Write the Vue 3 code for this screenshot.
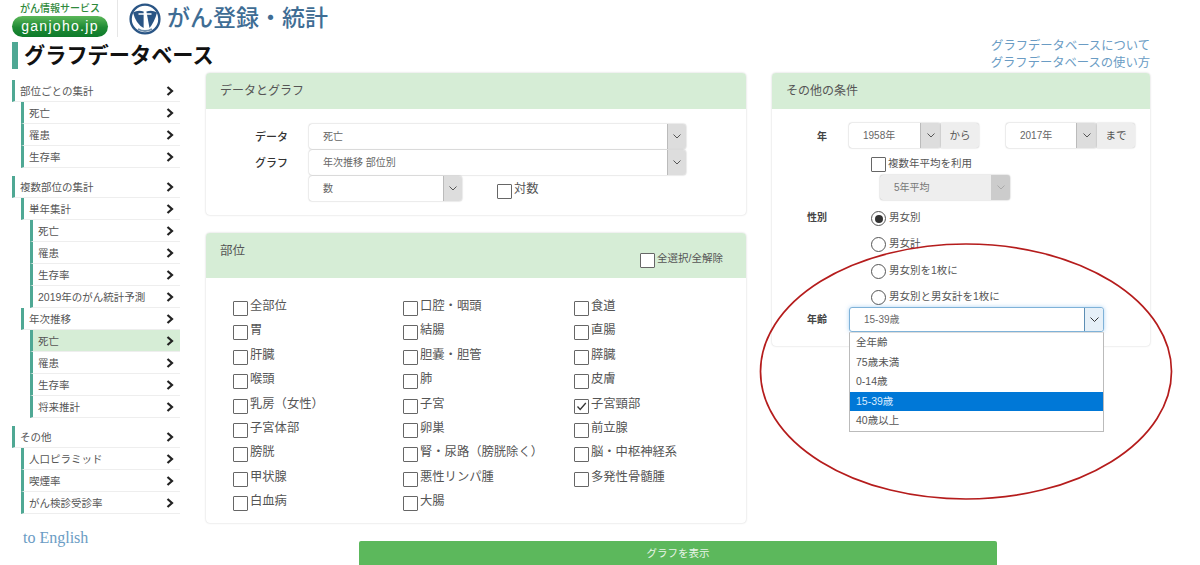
<script setup>
const menu = [
  [
    { label: '部位ごとの集計', level: 0 },
    { label: '死亡', level: 1 },
    { label: '罹患', level: 1 },
    { label: '生存率', level: 1 },
  ],
  [
    { label: '複数部位の集計', level: 0 },
    { label: '単年集計', level: 1 },
    { label: '死亡', level: 2 },
    { label: '罹患', level: 2 },
    { label: '生存率', level: 2 },
    { label: '2019年のがん統計予測', level: 2 },
    { label: '年次推移', level: 1 },
    { label: '死亡', level: 2, active: true },
    { label: '罹患', level: 2 },
    { label: '生存率', level: 2 },
    { label: '将来推計', level: 2 },
  ],
  [
    { label: 'その他', level: 0 },
    { label: '人口ピラミッド', level: 1 },
    { label: '喫煙率', level: 1 },
    { label: 'がん検診受診率', level: 1 },
  ],
]

const sites = [
  '全部位', '口腔・咽頭', '食道',
  '胃', '結腸', '直腸',
  '肝臓', '胆嚢・胆管', '膵臓',
  '喉頭', '肺', '皮膚',
  '乳房（女性）', '子宮', '子宮頸部',
  '子宮体部', '卵巣', '前立腺',
  '膀胱', '腎・尿路（膀胱除く）', '脳・中枢神経系',
  '甲状腺', '悪性リンパ腫', '多発性骨髄腫',
  '白血病', '大腸',
]

const sexes = ['男女別', '男女計', '男女別を1枚に', '男女別と男女計を1枚に']
const ages = ['全年齢', '75歳未満', '0-14歳', '15-39歳', '40歳以上']
</script>

<template>
  <div class="page">
    <header class="site-head">
      <div class="brand">
        <span class="brand-sub">がん情報サービス</span>
        <span class="brand-pill">ganjoho.jp</span>
      </div>
      <div class="logo">
        <svg width="32" height="32" viewBox="0 0 32 32" aria-hidden="true">
          <circle cx="16" cy="16" r="14.4" fill="#fff" stroke="#2a5585" stroke-width="2.4" />
          <path d="M4 9.5 Q9 6.5 14.6 8.5 L14.6 25 Q7 21 4 9.5 Z" fill="#2a5585" />
          <path d="M28 9.5 Q23 6.5 17.4 8.5 L20.5 25 Q25.5 19 28 9.5 Z" fill="#2a5585" />
          <path d="M9.5 11 H22.5 M16 8 V24" stroke="#fff" stroke-width="1.5" fill="none" />
          <path d="M9 26 Q16 30 23 26" stroke="#6f8eab" stroke-width="2" fill="none" />
        </svg>
        <span class="logo-text">がん登録・統計</span>
      </div>
    </header>

    <div class="title-row">
      <h1 class="title">グラフデータベース</h1>
      <div class="help-links">
        <a>グラフデータベースについて</a>
        <a>グラフデータベースの使い方</a>
      </div>
    </div>

    <div class="columns">
      <nav class="side">
        <div v-for="(group, g) in menu" :key="g" class="side-group">
          <div
            v-for="(item, i) in group"
            :key="i"
            class="side-row"
            :class="['lv' + item.level, { active: item.active }]"
          >
            <span>{{ item.label }}</span>
            <svg class="chev" width="8" height="10" viewBox="0 0 8 10" aria-hidden="true">
              <polyline points="1.5,1 6,5 1.5,9" fill="none" stroke="#222" stroke-width="2.2" />
            </svg>
          </div>
        </div>
        <a class="to-english">to English</a>
      </nav>

      <main class="middle">
        <section class="panel">
          <div class="panel-head">データとグラフ</div>
          <div class="data-body">
            <div class="form-row">
              <span class="form-label">データ</span>
              <div class="select wide">
                <span class="select-value">死亡</span>
                <span class="select-arrow">
                  <svg width="8" height="5" viewBox="0 0 8 5"><polyline points="0.5,0.5 4,4 7.5,0.5" fill="none" stroke="#555" /></svg>
                </span>
              </div>
            </div>
            <div class="form-row">
              <span class="form-label">グラフ</span>
              <div class="select wide">
                <span class="select-value">年次推移 部位別</span>
                <span class="select-arrow">
                  <svg width="8" height="5" viewBox="0 0 8 5"><polyline points="0.5,0.5 4,4 7.5,0.5" fill="none" stroke="#555" /></svg>
                </span>
              </div>
            </div>
            <div class="form-row">
              <span class="form-label"></span>
              <div class="select narrow">
                <span class="select-value">数</span>
                <span class="select-arrow">
                  <svg width="8" height="5" viewBox="0 0 8 5"><polyline points="0.5,0.5 4,4 7.5,0.5" fill="none" stroke="#555" /></svg>
                </span>
              </div>
              <label class="check log-check"><span class="box"></span><span>対数</span></label>
            </div>
          </div>
        </section>

        <section class="panel">
          <div class="panel-head site-head-row">
            <span class="site-title">部位</span>
            <label class="check all-check"><span class="box"></span><span>全選択/全解除</span></label>
          </div>
          <div class="site-grid">
            <label v-for="site in sites" :key="site" class="check">
              <span class="box">
                <svg v-if="site === '子宮頸部'" width="13" height="13" viewBox="0 0 13 13">
                  <polyline points="2.5,6.5 5.2,9.5 10.8,3" fill="none" stroke="#333" stroke-width="1.3" />
                </svg>
              </span>
              <span>{{ site }}</span>
            </label>
          </div>
        </section>

        <button class="show-btn">グラフを表示</button>
      </main>

      <aside class="right">
        <section class="panel">
          <div class="panel-head">その他の条件</div>
          <div class="cond-body">
            <div class="cond-row">
              <span class="cond-label">年</span>
              <div class="year-range">
                <div class="select year">
                  <span class="select-value">1958年</span>
                  <span class="select-arrow">
                    <svg width="8" height="5" viewBox="0 0 8 5"><polyline points="0.5,0.5 4,4 7.5,0.5" fill="none" stroke="#555" /></svg>
                  </span>
                </div>
                <span class="addon">から</span>
              </div>
              <div class="year-range">
                <div class="select year">
                  <span class="select-value">2017年</span>
                  <span class="select-arrow">
                    <svg width="8" height="5" viewBox="0 0 8 5"><polyline points="0.5,0.5 4,4 7.5,0.5" fill="none" stroke="#555" /></svg>
                  </span>
                </div>
                <span class="addon">まで</span>
              </div>
            </div>
            <label class="check avg-check"><span class="box"></span><span>複数年平均を利用</span></label>
            <div class="select disabled">
              <span class="select-value">5年平均</span>
              <span class="select-arrow">
                <svg width="8" height="5" viewBox="0 0 8 5"><polyline points="0.5,0.5 4,4 7.5,0.5" fill="none" stroke="#aaa" /></svg>
              </span>
            </div>
            <div class="sex-row">
              <span class="cond-label sex-label">性別</span>
              <div class="radios">
                <label v-for="(sex, i) in sexes" :key="sex" class="radio">
                  <span class="circle" :class="{ on: i === 0 }"></span>
                  <span>{{ sex }}</span>
                </label>
              </div>
            </div>
            <div class="cond-row age-row">
              <span class="cond-label">年齢</span>
              <div class="age-wrap">
                <div class="select age">
                  <span class="select-value">15-39歳</span>
                  <span class="select-arrow">
                    <svg width="9" height="6" viewBox="0 0 9 6"><polyline points="0.5,0.5 4.5,4.5 8.5,0.5" fill="none" stroke="#333" /></svg>
                  </span>
                </div>
                <ul class="age-menu">
                  <li v-for="age in ages" :key="age" :class="{ picked: age === '15-39歳' }">{{ age }}</li>
                </ul>
              </div>
            </div>
          </div>
        </section>
      </aside>
    </div>

    <!-- hand-drawn mark on the screenshot -->
    <svg class="red-mark" width="420" height="262" viewBox="0 0 420 262" aria-hidden="true">
      <ellipse cx="209" cy="130.5" rx="205.5" ry="127.5" fill="none" stroke="#b51c1c" stroke-width="1.7" />
    </svg>
  </div>
</template>

<style scoped>
.page {
  position: relative;
  width: 1200px;
  height: 565px;
  overflow: hidden;
  background: #fff;
  color: #555;
  font-family: "Liberation Sans", "Noto Sans CJK JP", sans-serif;
  font-size: 12px;
}

/* header */
.site-head {
  display: flex;
  height: 37px;
  padding-left: 12px;
}
.brand {
  width: 96px;
  display: flex;
  flex-direction: column;
  align-items: center;
  padding-right: 9px;
  box-sizing: content-box;
  border-right: 1px solid #e6e6e6;
}
.brand-sub {
  height: 16px;
  line-height: 17px;
  font-size: 10px;
  color: #2f8a3c;
  font-weight: 500;
}
.brand-pill {
  width: 96px;
  height: 21px;
  line-height: 21px;
  border-radius: 11px;
  background: linear-gradient(#5cb85a, #1f8a34 55%, #0d7a2a);
  color: #fff;
  text-align: center;
  font-size: 14px;
  letter-spacing: 1.3px;
}
.logo {
  display: flex;
  align-items: center;
  gap: 6px;
  margin-left: 11px;
}
.logo-text {
  font-size: 23px;
  line-height: 37px;
  color: #3f6d94;
  font-weight: 500;
  white-space: nowrap;
}

/* title */
.title-row {
  display: flex;
  justify-content: space-between;
  align-items: center;
  height: 36px;
  padding: 0 50px 0 12px;
}
.title {
  margin: 0;
  height: 27px;
  line-height: 27px;
  padding-left: 6px;
  border-left: 6px solid #4fa894;
  font-size: 21.2px;
  font-weight: 700;
  color: #111;
}
.help-links {
  display: flex;
  flex-direction: column;
  align-items: flex-end;
  font-size: 12.3px;
  line-height: 17px;
  color: #6a9cc4;
}

/* columns */
.columns {
  display: grid;
  grid-template-columns: 168px 540px 378px;
  column-gap: 26px;
  padding-left: 12px;
}

/* side menu */
.side {
  padding-top: 7px;
}
.side-group {
  margin-bottom: 8px;
}
.side-row {
  display: flex;
  justify-content: space-between;
  align-items: center;
  height: 22px;
  box-sizing: border-box;
  padding: 0 6px 0 5px;
  border-left: 3px solid #4fa894;
  border-bottom: 1px solid #eee;
  font-size: 10.5px;
  color: #555;
  white-space: nowrap;
}
.side-row.lv1 {
  margin-left: 9px;
}
.side-row.lv2 {
  margin-left: 18px;
}
.side-row.active {
  background: #d6edd6;
}
.to-english {
  display: block;
  margin: 14px 0 0 11px;
  font-family: "Liberation Serif", serif;
  font-size: 16px;
  line-height: 20px;
  color: #6a9cc4;
}

/* panels */
.panel {
  border-radius: 4px;
  box-shadow: 0 0 2px rgba(0, 0, 0, 0.22);
  background: #fff;
}
.panel-head {
  height: 36px;
  line-height: 36px;
  padding-left: 14px;
  border-radius: 4px 4px 0 0;
  background: #d6edd6;
  font-size: 12px;
  color: #555;
}

.data-body {
  height: 106px;
  box-sizing: border-box;
  padding-top: 14px;
}
.form-row {
  display: flex;
  align-items: center;
  height: 26px;
}
.form-label {
  width: 103px;
  padding-left: 49px;
  box-sizing: border-box;
  font-size: 11px;
  font-weight: 500;
  color: #333;
}

/* fake select */
.select {
  display: flex;
  height: 25px;
  box-sizing: border-box;
  border-radius: 3px;
  box-shadow: 0 0 1.5px rgba(0, 0, 0, 0.4);
  background: #fff;
  font-size: 10px;
  color: #666;
}
.select-value {
  flex: 1;
  padding-left: 14px;
  line-height: 25px;
}
.select-arrow {
  display: flex;
  align-items: center;
  justify-content: center;
  width: 18px;
  border-radius: 0 3px 3px 0;
  background: #ddd;
  border-left: 1px solid #bbb;
}
.select.wide {
  width: 377px;
}
.select.narrow {
  width: 153px;
}
.log-check {
  margin: 4px 0 0 35px;
}

/* checkboxes */
.check {
  display: flex;
  align-items: flex-start;
  gap: 2px;
  font-size: 12.3px;
  line-height: 16px;
  color: #555;
  white-space: nowrap;
}
.box {
  display: flex;
  align-items: center;
  justify-content: center;
  flex: none;
  width: 15px;
  height: 15px;
  margin-top: 3px;
  box-sizing: border-box;
  border: 1px solid #666;
  border-radius: 1px;
  background: #fff;
}

.site-head-row {
  display: flex;
  justify-content: space-between;
  height: 45px;
  padding-right: 23px;
}
.site-title {
  line-height: 36px;
  font-size: 12.5px;
}
.all-check {
  align-self: flex-start;
  margin-top: 17px;
  font-size: 10.5px;
}
.site-grid {
  display: grid;
  grid-template-columns: 170px 171px 1fr;
  grid-auto-rows: 24.4px;
  height: 245px;
  box-sizing: border-box;
  padding: 20px 0 0 27px;
}

.middle section + section {
  margin-top: 18px;
}
.show-btn {
  display: block;
  width: 638px;
  height: 30px;
  margin: 18px 0 0 153px;
  padding: 0 0 8px;
  border: 0;
  border-radius: 2px 2px 0 0;
  background: #5cb85c;
  color: #e8f5e8;
  font-family: inherit;
  font-size: 10.5px;
}

/* conditions */
.right {
  min-width: 0;
}
.cond-body {
  height: 237px;
  box-sizing: border-box;
  padding-top: 14px;
}
.cond-row {
  display: flex;
  align-items: center;
}
.cond-label {
  flex: none;
  width: 77px;
  padding-right: 22px;
  box-sizing: border-box;
  text-align: right;
  font-size: 10px;
  font-weight: 700;
  color: #444;
}
.year-range {
  display: flex;
  flex: none;
}
.year-range + .year-range {
  margin-left: 27px;
}
.select.year {
  width: 92px;
}
.select.year .select-arrow {
  width: 20px;
}
.year-range + .year-range .select.year {
  width: 91px;
}
.addon {
  width: 38px;
  height: 25px;
  line-height: 25px;
  text-align: center;
  border-radius: 0 3px 3px 0;
  box-shadow: 0 0 1.5px rgba(0, 0, 0, 0.3);
  background: #eee;
  font-size: 10.5px;
  color: #555;
}
.avg-check {
  margin: 7px 0 0 99px;
  height: 20px;
  font-size: 10.5px;
  align-items: flex-start;
}
.avg-check .box {
  margin-top: 2px;
}
.select.disabled {
  width: 130px;
  margin: 0 0 0 108px;
  background: #eee;
  color: #777;
}
.select.disabled .select-arrow {
  width: 19px;
  background: #ccc;
  border-left: 0;
}
.sex-row {
  display: flex;
  margin-top: 3px;
}
.sex-label {
  padding-top: 6px;
  line-height: 18px;
}
.radios {
  margin-left: 22px;
  display: flex;
  flex-direction: column;
}
.radio {
  display: flex;
  align-items: flex-start;
  gap: 3px;
  height: 26.3px;
  padding-top: 7px;
  box-sizing: border-box;
  font-size: 10.5px;
  line-height: 14px;
  white-space: nowrap;
  color: #555;
}
.circle {
  position: relative;
  flex: none;
  width: 15px;
  height: 15px;
  margin-top: 1px;
  box-sizing: border-box;
  border: 1px solid #555;
  border-radius: 50%;
  background: #fff;
}
.circle.on::after {
  content: "";
  position: absolute;
  inset: 2.5px;
  border-radius: 50%;
  background: #333;
}
.age-row {
  margin-top: -1px;
  align-items: flex-start;
}
.age-row .cond-label {
  line-height: 25px;
}
.age-wrap {
  position: relative;
  width: 255px;
}
.select.age {
  height: 25px;
  border: 1px solid #7fb2d8;
  box-shadow: 0 0 4px rgba(102, 175, 233, 0.55);
}
.select.age .select-arrow {
  background: #e6f0f8;
  border-left: 1px solid #5c8eb4;
}
.select.age .select-value {
  line-height: 23px;
}
.age-menu {
  position: absolute;
  left: 0;
  right: 0;
  top: 25px;
  z-index: 5;
  margin: 0;
  padding: 0;
  list-style: none;
  background: #fff;
  border: 1px solid #bbb;
  border-top-color: #ddd;
}
.age-menu li {
  height: 19.5px;
  line-height: 19px;
  padding-left: 6px;
  font-size: 10.5px;
  color: #555;
}
.age-menu li.picked {
  background: #0078d7;
  color: #d8ecff;
}

/* red annotation over the screenshot */
.red-mark {
  position: absolute;
  left: 757px;
  top: 241px;
  z-index: 6;
  pointer-events: none;
}
</style>
